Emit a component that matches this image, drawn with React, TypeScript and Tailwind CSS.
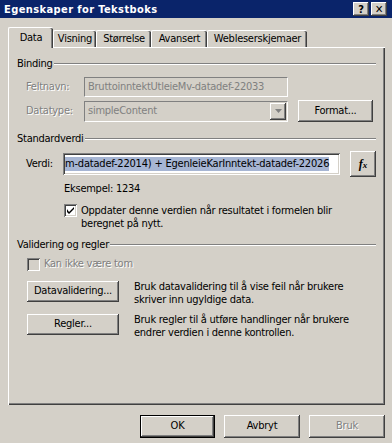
import React from "react";

const FONT = { fontFamily: "Tahoma, 'DejaVu Sans Condensed', 'Liberation Sans', sans-serif" };

const raised =
  "shadow-[inset_-1px_-1px_#404040,inset_1px_1px_#ffffff,inset_-2px_-2px_#808080,inset_2px_2px_#d4d0c8]";
const sunken =
  "shadow-[inset_1px_1px_#808080,inset_-1px_-1px_#ffffff,inset_2px_2px_#404040,inset_-2px_-2px_#d4d0c8]";

function Btn({ children, className = "", disabled = false }: { children: React.ReactNode; className?: string; disabled?: boolean }) {
  return (
    <div
      className={`flex items-center justify-center bg-[#d4d0c8] ${raised} ${className} ${
        disabled ? "text-[#808080] [text-shadow:1px_1px_0_#ffffff]" : "text-black"
      }`}
    >
      {children}
    </div>
  );
}

function GroupHeader({ label }: { label: string }) {
  return (
    <div className="flex items-center h-[13px] leading-[13px] pl-[8px] pr-[9px]">
      <span>{label}</span>
      <div className="flex-1 ml-[1px] h-[2px] border-t border-t-[#808080] border-b border-b-white" />
    </div>
  );
}

function Tab({ label, w, selected = false }: { label: string; w: string; selected?: boolean }) {
  return (
    <div
      className={`${w} ${
        selected ? "h-[21px] z-10 -mb-[1px] pt-[3px]" : "h-[17px] pt-[1px]"
      } relative flex justify-center bg-[#d4d0c8] border-t border-l border-t-white border-l-white rounded-tl-[2px] rounded-tr-[2px] shadow-[inset_-1px_0_#404040,inset_-2px_0_#808080]`}
    >
      <span className="leading-[13px]">{label}</span>
    </div>
  );
}

export default function App() {
  return (
    <div style={FONT} className="w-[392px] h-[443px] bg-[#d4d0c8] text-[11px] tracking-[-0.25px] text-black overflow-hidden">
      {/* Title bar */}
      <div className="h-[18px] bg-[#0a246a] flex items-center pl-[4px] pr-[5px]">
        <span className="font-bold text-white text-[11px] leading-[13px] tracking-[0.4px] flex-1">Egenskaper for Tekstboks</span>
        <div className="flex gap-[2px]">
          <Btn className="w-[16px] h-[14px] font-bold text-[11px] leading-none">?</Btn>
          <Btn className="w-[16px] h-[14px] font-bold text-[11px] leading-none">✕</Btn>
        </div>
      </div>

      {/* Tabs */}
      <div className="mt-[9px] pl-[8px] h-[20px] flex items-end">
        <Tab label="Data" w="w-[45px]" selected />
        <Tab label="Visning" w="w-[43px]" />
        <Tab label="Størrelse" w="w-[55px]" />
        <Tab label="Avansert" w="w-[56px]" />
        <Tab label="Webleserskjemaer" w="w-[100px]" />
      </div>

      {/* Panel */}
      <div className="ml-[8px] w-[377px] h-[358px] border-t border-l border-t-white border-l-white shadow-[inset_-1px_-1px_#404040,inset_-2px_-2px_#808080] flex flex-col">
        <div className="mt-[9px]">
          <GroupHeader label="Binding" />
        </div>

        {/* Feltnavn */}
        <div className="mt-[7px] h-[20px] flex items-center pl-[17px]">
          <span className="w-[58px] text-[#808080] [text-shadow:1px_1px_0_#ffffff]">Feltnavn:</span>
          <div className="w-[204px] h-[20px] border border-t-[#808080] border-l-[#808080] border-b-white border-r-white flex items-center pl-[3px] text-[#808080] overflow-hidden whitespace-nowrap">
            BruttoinntektUtleieMv-datadef-22033
          </div>
        </div>

        {/* Datatype */}
        <div className="mt-[3px] h-[22px] flex items-center pl-[17px]">
          <span className="w-[58px] text-[#808080] [text-shadow:1px_1px_0_#ffffff]">Datatype:</span>
          <div className="w-[204px] h-[21px] border border-t-[#808080] border-l-[#808080] border-b-white border-r-white flex items-center pl-[3px] text-[#808080]">
            <span className="flex-1">simpleContent</span>
            <div className={`w-[16px] h-[17px] mr-[1px] bg-[#d4d0c8] ${raised} flex items-center justify-center`}>
              <svg width="7" height="4" viewBox="0 0 7 4">
                <path d="M0 0h7L3.5 4z" fill="#808080" />
              </svg>
            </div>
          </div>
          <Btn className="ml-[10px] w-[75px] h-[22px]">Format...</Btn>
        </div>

        <div className="mt-[10px]">
          <GroupHeader label="Standardverdi" />
        </div>

        {/* Verdi */}
        <div className="mt-[6px] h-[26px] flex items-center pl-[17px]">
          <span className="w-[37px]">Verdi:</span>
          <div className={`w-[277px] h-[22px] bg-white ${sunken} flex items-center pl-[2px] pr-[2px] overflow-hidden whitespace-nowrap`}>
            <span className="bg-[#a6b5d3] leading-[14px] tracking-[-0.2px]">m-datadef-22014) + EgenleieKarInntekt-datadef-22026</span>
          </div>
          <Btn className="ml-[10px] w-[26px] h-[26px]">
            <span className="font-['Liberation_Serif'] italic font-bold text-[12px] tracking-normal">
              f<span className="text-[9px]">x</span>
            </span>
          </Btn>
        </div>

        {/* Eksempel */}
        <div className="mt-[5px] pl-[55px] leading-[13px]">Eksempel: 1234</div>

        {/* Checkbox */}
        <div className="mt-[9px] pl-[55px] flex items-start">
          <div className={`w-[13px] h-[13px] bg-white ${sunken} flex items-center justify-center shrink-0`}>
            <svg width="7" height="7" viewBox="0 0 7 7">
              <path d="M0 2v3l2 2 5-5V-0L2 5z" fill="#000" />
            </svg>
          </div>
          <div className="ml-[4px] leading-[13px] w-[262px]">
            Oppdater denne verdien når resultatet i formelen blir beregnet på nytt.
          </div>
        </div>

        <div className="mt-[8px]">
          <GroupHeader label="Validering og regler" />
        </div>

        {/* Kan ikke være tom */}
        <div className="mt-[7px] pl-[18px] flex items-center h-[13px]">
          <div className={`w-[13px] h-[13px] bg-[#d4d0c8] ${sunken}`} />
          <span className="ml-[4px] text-[#808080] [text-shadow:1px_1px_0_#ffffff]">Kan ikke være tom</span>
        </div>

        {/* Datavalidering */}
        <div className="mt-[10px] pl-[18px] flex items-start">
          <Btn className="w-[92px] h-[21px] shrink-0">Datavalidering...</Btn>
          <div className="ml-[15px] leading-[13px] -mt-[1px]">
            Bruk datavalidering til å vise feil når brukere
            <br />
            skriver inn ugyldige data.
          </div>
        </div>

        <div className="mt-[8px] pl-[18px] flex items-start">
          <Btn className="w-[92px] h-[21px] shrink-0">Regler...</Btn>
          <div className="ml-[15px] leading-[13px] -mt-[1px]">
            Bruk regler til å utføre handlinger når brukere
            <br />
            endrer verdien i denne kontrollen.
          </div>
        </div>
      </div>

      {/* Bottom buttons */}
      <div className="mt-[10px] flex justify-end pr-[7px] gap-[9px]">
        <div className="w-[75px] h-[23px] border border-black">
          <Btn className="w-full h-full">OK</Btn>
        </div>
        <Btn className="w-[76px] h-[23px]">Avbryt</Btn>
        <Btn className="w-[76px] h-[23px]" disabled>
          Bruk
        </Btn>
      </div>
    </div>
  );
}
